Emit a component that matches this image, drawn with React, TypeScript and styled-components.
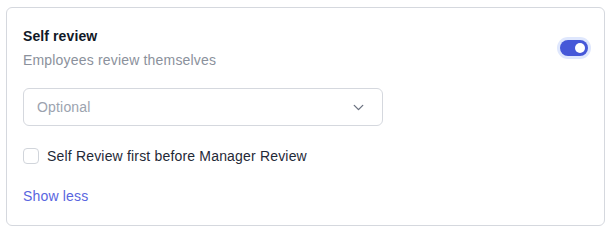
import { useState } from 'react'
import styled, { createGlobalStyle } from 'styled-components'

const GlobalStyle = createGlobalStyle`
  html, body {
    margin: 0;
    padding: 0;
    background: #ffffff;
  }

  body {
    font-family: 'Liberation Sans', Arial, sans-serif;
    letter-spacing: 0.18px;
    -webkit-font-smoothing: antialiased;
  }
`

const Page = styled.div`
  padding: 7px 7px 3px 6px;
`

const Card = styled.section`
  border: 1px solid #d5d8de;
  border-radius: 6px;
  padding: 18px 16px 19px 16px;
  background: #ffffff;
`

const Header = styled.div`
  display: flex;
  align-items: center;
  justify-content: space-between;
`

const TitleBlock = styled.div`
  display: flex;
  flex-direction: column;
  gap: 4px;
`

const Title = styled.h3`
  margin: 0;
  font-size: 14px;
  line-height: 20px;
  font-weight: 700;
  letter-spacing: 0.1px;
  color: #111827;
`

const Subtitle = styled.p`
  margin: 0;
  font-size: 14px;
  line-height: 20px;
  color: #8b919c;
`

const Track = styled.button<{ $on: boolean }>`
  position: relative;
  width: 28px;
  height: 16px;
  margin-right: 0;
  padding: 0;
  border: none;
  border-radius: 999px;
  background: ${({ $on }) => ($on ? '#4658d8' : '#d1d5db')};
  box-shadow: 0 0 0 3px ${({ $on }) => ($on ? '#dfe7fd' : 'transparent')};
  cursor: pointer;
`

const Knob = styled.span<{ $on: boolean }>`
  position: absolute;
  top: 3px;
  left: ${({ $on }) => ($on ? '15px' : '3px')};
  width: 10px;
  height: 10px;
  border-radius: 50%;
  background: #ffffff;
`

const Select = styled.button`
  display: flex;
  align-items: center;
  justify-content: space-between;
  box-sizing: border-box;
  width: 360px;
  height: 38px;
  margin-top: 18px;
  padding: 0 15px 0 13px;
  border: 1px solid #d5d8de;
  border-radius: 6px;
  background: #ffffff;
  font-family: inherit;
  font-size: 14px;
  letter-spacing: inherit;
  color: #9ca3af;
  cursor: pointer;
`

const CheckRow = styled.label`
  display: flex;
  align-items: center;
  gap: 8px;
  margin-top: 20px;
  font-size: 14px;
  line-height: 20px;
  color: #1f2937;
  cursor: pointer;
`

const Box = styled.span`
  box-sizing: border-box;
  width: 16px;
  height: 16px;
  border: 1px solid #d1d5db;
  border-radius: 4px;
  background: #ffffff;
`

const LinkButton = styled.button`
  display: block;
  margin-top: 20px;
  padding: 0;
  border: none;
  background: none;
  font-family: inherit;
  font-size: 14px;
  line-height: 20px;
  letter-spacing: inherit;
  color: #5865e0;
  cursor: pointer;
`

const Chevron = () => (
  <svg width="17" height="17" viewBox="0 0 24 24" fill="none" stroke="#6b7280" strokeWidth="1.9" strokeLinecap="round" strokeLinejoin="round">
    <path d="m6 9 6 6 6-6" />
  </svg>
)

export default function App() {
  const [on, setOn] = useState(true)

  return (
    <Page>
      <GlobalStyle />
      <Card>
        <Header>
          <TitleBlock>
            <Title>Self review</Title>
            <Subtitle>Employees review themselves</Subtitle>
          </TitleBlock>
          <Track $on={on} onClick={() => setOn(!on)} aria-label="Toggle self review">
            <Knob $on={on} />
          </Track>
        </Header>
        <Select>
          Optional
          <Chevron />
        </Select>
        <CheckRow>
          <Box />
          Self Review first before Manager Review
        </CheckRow>
        <LinkButton>Show less</LinkButton>
      </Card>
    </Page>
  )
}
